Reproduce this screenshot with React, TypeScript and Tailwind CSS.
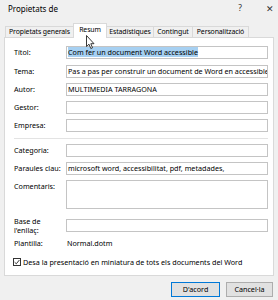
import React from 'react'

const fields = [
  {label: 'Títol:', value: 'Com fer un document Word accessible', selected: true, top: 'mt-0'},
  {label: 'Tema:', value: 'Pas a pas per construir un document de Word en accessible', top: 'mt-[6px]'},
  {label: 'Autor:', value: 'MULTIMEDIA TARRAGONA', top: 'mt-[5px]'},
  {label: 'Gestor:', value: '', top: 'mt-[5px]'},
  {label: 'Empresa:', value: '', top: 'mt-[5px]'},
]

const tabs = [
  {name: 'Propietats generals', w: 'w-[69px]'},
  {name: 'Resum', w: 'w-[34px]'},
  {name: 'Estadístiques', w: 'w-[48px]'},
  {name: 'Contingut', w: 'w-[40px]'},
  {name: 'Personalització', w: 'w-[57px]'},
]

function TextBox({value, selected, className = ''}: {value: string; selected?: boolean; className?: string}) {
  return (
    <div className={`border border-[#c4c4c4] bg-white overflow-hidden whitespace-nowrap pl-[1px] leading-[11px] ${className}`}>
      {selected ? <span className="bg-[#a6d0f2]">{value}</span> : value}
    </div>
  )
}

function Cursor() {
  return (
    <svg className="absolute left-[86px] top-[35px] z-20" width="10" height="15" viewBox="0 0 10 15">
      <path d="M0.5 0.5 L0.5 11.5 L3 9.2 L4.8 13.5 L6.5 12.8 L4.8 8.7 L8 8.7 Z" fill="white" stroke="#222" strokeWidth="0.9" strokeLinejoin="round" />
    </svg>
  )
}

export default function App() {
  return (
    <div className="relative w-[278px] h-[300px] overflow-hidden bg-[#f0f0f0] text-[7.2px] text-black font-['Noto_Sans',sans-serif]">
      {/* Title bar */}
      <div className="h-[17px] flex items-center pl-[8px] text-[8px]">
        <span>Propietats de</span>
        <span className="ml-auto w-[10px] text-center text-[8.5px] text-[#333]">?</span>
        <span className="ml-[20px] mr-[3px] w-[10px] text-center text-[9px] text-[#333]">✕</span>
      </div>

      {/* Tabs */}
      <div className="relative z-10 mt-[6px] h-[15px] flex items-end pl-[5px] text-[6.9px] tracking-[-0.1px]">
        {tabs.map((t, i) =>
          t.name === 'Resum' ? (
            <div key={t.name} className={`-ml-px h-[15px] ${t.w} border border-b-0 border-[#d9d9d9] bg-white flex justify-center pt-[1px]`}>
              {t.name}
            </div>
          ) : (
            <div
              key={t.name}
              className={`${i > 0 ? '-ml-px' : ''} ${t.w} mb-[1px] h-[11px] border border-b-0 border-[#d9d9d9] bg-[#f0f0f0] flex items-center justify-center leading-none whitespace-nowrap`}
            >
              {t.name}
            </div>
          ),
        )}
      </div>

      {/* Panel */}
      <div className="-mt-px mx-[4px] h-[239px] border border-[#d9d9d9] bg-white pt-[8px] pl-[9px] pr-[5px] flex flex-col">
        {fields.map((f) => (
          <div key={f.label} className={`grid grid-cols-[52px_1fr] items-center h-[13px] ${f.top}`}>
            <span>{f.label}</span>
            <TextBox value={f.value} selected={f.selected} className="h-[13px]" />
          </div>
        ))}

        <div className="mt-[6px] h-px bg-[#e3e3e3]" />

        <div className="mt-[5px] grid grid-cols-[52px_1fr] items-center h-[13px]">
          <span>Categoria:</span>
          <TextBox value="" className="h-[13px]" />
        </div>
        <div className="mt-[5px] grid grid-cols-[52px_1fr] items-center h-[13px]">
          <span className="whitespace-nowrap">Paraules clau:</span>
          <TextBox value="microsoft word, accessibilitat, pdf, metadades," className="h-[13px]" />
        </div>
        <div className="mt-[5px] grid grid-cols-[52px_1fr] items-start h-[29px]">
          <span className="pt-[1px]">Comentaris:</span>
          <TextBox value="" className="h-[29px]" />
        </div>
        <div className="mt-[8px] grid grid-cols-[52px_1fr] items-center h-[13px]">
          <span className="leading-[8.5px]">
            Base de
            <br />
            l'enllaç:
          </span>
          <TextBox value="" className="h-[13px]" />
        </div>
        <div className="mt-[8px] grid grid-cols-[52px_1fr] items-center h-[10px]">
          <span>Plantilla:</span>
          <span className="pl-[1px]">Normal.dotm</span>
        </div>

        <div className="mt-[9px] flex items-center -ml-[1px] h-[10px]">
          <div className="w-[8px] h-[8px] border border-[#333] bg-white flex items-center justify-center">
            <svg width="6" height="6" viewBox="0 0 6 6">
              <path d="M0.6 3.2 L2.3 4.8 L5.4 1" fill="none" stroke="#222" strokeWidth="0.9" />
            </svg>
          </div>
          <span className="ml-[2px]">Desa la presentació en miniatura de tots els documents del Word</span>
        </div>
      </div>

      {/* Buttons */}
      <div className="mt-[6px] flex justify-end gap-[6px] pr-[5px]">
        <button className="w-[49px] h-[15px] border border-[#0078d7] bg-[#e1e1e1] text-[7.2px] leading-none">D'acord</button>
        <button className="w-[47px] h-[15px] border border-[#adadad] bg-[#e1e1e1] text-[7.2px] leading-none">Cancel·la</button>
      </div>

      <Cursor />
    </div>
  )
}
